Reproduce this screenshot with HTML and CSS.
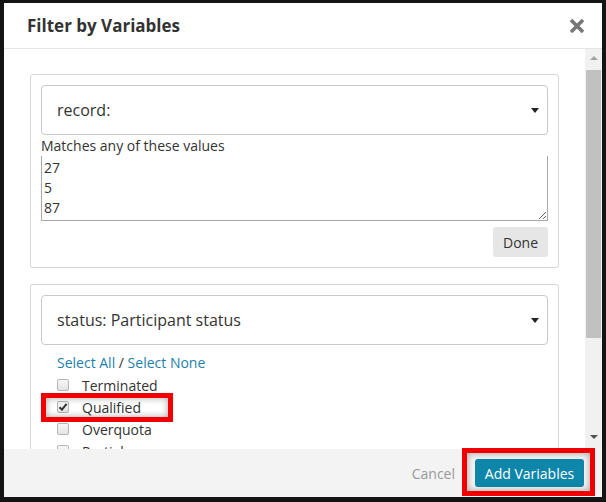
FILE: index.html
```html
<!DOCTYPE html>
<html lang="en">
<head>
    <meta charset="UTF-8">
    <meta name="viewport" content="width=device-width, initial-scale=1.0">
    <title>Filter by Variables</title>
    <link rel="stylesheet" href="styles.css">
</head>
<body>
    <div class="modal">
        <div class="modal-header">
            <h1>Filter by Variables</h1>
            <button class="close-btn" aria-label="Close">
                <svg width="16" height="16" viewBox="0 0 16 16">
                    <path d="M2 2 L14 14 M14 2 L2 14" stroke="#777" stroke-width="3.6" stroke-linecap="butt"/>
                </svg>
            </button>
        </div>

        <div class="modal-main">
            <div class="modal-body">
                <div class="panel">
                    <div class="select-box">
                        <span>record:</span>
                        <span class="caret"></span>
                    </div>
                    <label class="values-label" for="record-values">Matches any of these values</label>
                    <textarea id="record-values" class="values">27
5
87</textarea>
                    <div class="panel-actions">
                        <button class="done-btn">Done</button>
                    </div>
                </div>

                <div class="panel">
                    <div class="select-box">
                        <span>status: Participant status</span>
                        <span class="caret"></span>
                    </div>
                    <div class="option-list">
                        <div class="select-links"><a href="#">Select All</a> / <a href="#">Select None</a></div>
                        <div class="option"><span class="check"></span>Terminated</div>
                        <div class="option marked">
                            <span class="check checked">
                                <svg width="10" height="10" viewBox="0 0 10 10">
                                    <path d="M1.5 5.2 L4 7.6 L8.6 1.8" fill="none" stroke="#333" stroke-width="2"/>
                                </svg>
                            </span>Qualified
                            <span class="highlight"></span>
                        </div>
                        <div class="option"><span class="check"></span>Overquota</div>
                        <div class="option"><span class="check"></span>Partial</div>
                    </div>
                </div>
            </div>

            <div class="scrollbar">
                <div class="scroll-btn"><span class="arrow-up"></span></div>
                <div class="scroll-thumb"></div>
                <div class="scroll-btn down"><span class="arrow-down"></span></div>
            </div>
        </div>

        <div class="modal-footer">
            <a href="#" class="cancel-link">Cancel</a>
            <span class="marked">
                <button class="add-btn">Add Variables</button>
                <span class="highlight wide"></span>
            </span>
        </div>
    </div>
</body>
</html>
```

FILE: styles.css
```css
body {
    margin: 0;
    padding: 3px 4px 5px 4px;
    background-color: #141414;
    font-family: "Open Sans", "Liberation Sans", sans-serif;
    color: #333;
}

.modal {
    width: 598px;
    height: 494px;
    background-color: #fff;
    display: flex;
    flex-direction: column;
}

/* Header */
.modal-header {
    height: 45px;
    border-bottom: 1px solid #e5e5e5;
    display: flex;
    align-items: center;
    justify-content: space-between;
    padding: 0 17px 0 23px;
}

.modal-header h1 {
    margin: 0;
    font-size: 17px;
    font-weight: bold;
    color: #333;
}

.close-btn {
    background: none;
    border: none;
    padding: 0;
    width: 16px;
    height: 16px;
    display: flex;
}

/* Scrolling body */
.modal-main {
    flex: 1;
    display: flex;
    overflow: hidden;
}

.modal-body {
    flex: 1;
    padding: 25px 26px 0 26px;
    overflow: hidden;
}

.panel {
    border: 1px solid #d6d6d6;
    border-radius: 3px;
    padding: 10px;
    margin-bottom: 16px;
}

.select-box {
    height: 48px;
    border: 1px solid #c8c8c8;
    border-radius: 4px;
    display: flex;
    align-items: center;
    justify-content: space-between;
    padding: 0 8px 0 15px;
    font-size: 16px;
}

.caret {
    width: 0;
    height: 0;
    border-top: 5px solid #222;
    border-left: 4px solid transparent;
    border-right: 4px solid transparent;
}

.values-label {
    display: block;
    font-size: 14px;
    line-height: 21px;
}

.values {
    display: block;
    box-sizing: border-box;
    width: 100%;
    height: 65px;
    margin: 0;
    padding: 2px 2px;
    border: 1px solid #a9a9a9;
    border-top: none;
    font-family: inherit;
    font-size: 14px;
    line-height: 20px;
    color: #333;
    resize: vertical;
    outline: none;
}

.panel-actions {
    display: flex;
    justify-content: flex-end;
    margin-top: 6px;
}

.done-btn {
    height: 30px;
    width: 55px;
    background-color: #e6e6e6;
    border: none;
    border-radius: 3px;
    font-family: inherit;
    font-size: 14px;
    color: #333;
}

.option-list {
    padding: 7px 0 0 16px;
    font-size: 14px;
}

.select-links {
    line-height: 22px;
}

.select-links a {
    color: #1d7fad;
    text-decoration: none;
}

.option {
    height: 22px;
    display: flex;
    align-items: center;
}

.check {
    box-sizing: border-box;
    width: 12px;
    height: 12px;
    margin-right: 13px;
    border: 1px solid #b5b5b5;
    border-radius: 2px;
    background: linear-gradient(#f7f7f7, #e3e3e3);
    display: flex;
    align-items: center;
    justify-content: center;
}

/* Red annotation frames */
.marked {
    position: relative;
}

.highlight {
    position: absolute;
    top: -3px;
    bottom: -4px;
    left: -16px;
    width: 132px;
    box-sizing: border-box;
    border: 5px solid #f20000;
    box-shadow: inset 0 0 7px rgba(0, 0, 0, 0.35);
}

.highlight.wide {
    top: -11px;
    bottom: -9px;
    left: -13px;
    right: -11px;
    width: auto;
}

/* Scrollbar */
.scrollbar {
    width: 17px;
    background-color: #f1f1f1;
    display: flex;
    flex-direction: column;
    align-items: center;
}

.scroll-btn {
    height: 17px;
    display: flex;
    align-items: center;
    justify-content: center;
}

.scroll-btn.down {
    margin-top: auto;
    margin-bottom: 4px;
}

.arrow-up {
    border-bottom: 4px solid #a3a3a3;
    border-left: 4px solid transparent;
    border-right: 4px solid transparent;
}

.arrow-down {
    border-top: 4px solid #505050;
    border-left: 4px solid transparent;
    border-right: 4px solid transparent;
}

.scroll-thumb {
    width: 15px;
    height: 268px;
    margin-top: 4px;
    background-color: #c1c1c1;
}

/* Footer */
.modal-footer {
    height: 48px;
    background-color: #f3f3f3;
    display: flex;
    align-items: center;
    justify-content: flex-end;
    padding-right: 18px;
}

.cancel-link {
    color: #999;
    font-size: 14px;
    text-decoration: none;
    margin-right: 20px;
}

.add-btn {
    height: 28px;
    width: 109px;
    background-color: #0e86a9;
    border: none;
    border-radius: 3px;
    color: #fff;
    font-family: inherit;
    font-size: 14px;
}
```
